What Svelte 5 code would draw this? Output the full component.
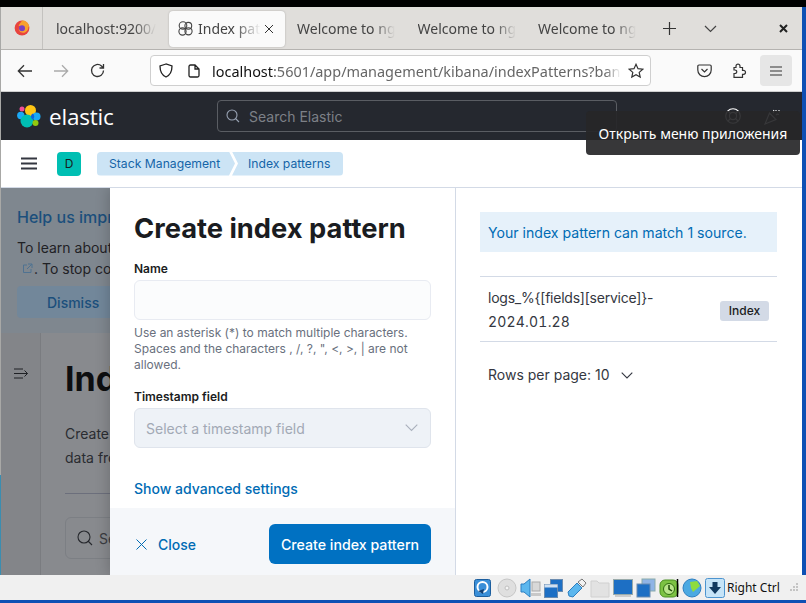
<script>
  const tabs = ['Welcome to nginx!', 'Welcome to nginx!', 'Welcome to nginx!'];
</script>

<div class="screen">
  <div class="topblack"></div>
  <div class="window">
    <div class="deskedge"></div>
    <div class="browser">
      <div class="tabbar">
        <div class="ffbox">
          <svg width="16" height="16" viewBox="0 0 16 16">
            <circle cx="8" cy="8" r="7.4" fill="#e8443f" />
            <path d="M8 .6a7.4 7.4 0 0 1 7.2 5.6c.4 2-.2 1-.8.4.3 2.2-1 5-3.4 5.8C8.400 13.400 5 12 4.800 9.400 4.600 7.600 6 7 6.800 6.600 5.800 6 5 6 4.500 6.200 5 4 6.500 3.500 8 .6z" fill="#f9a12e" />
            <circle cx="8" cy="8.300" r="3" fill="#7a3fc4" />
          </svg>
        </div>
        <div class="tab firsttab"><span class="tabtext">localhost:9200/</span></div>
        <div class="tab active">
          <svg class="globe" width="17" height="17" viewBox="0 0 17 17" fill="none" stroke="#444" stroke-width="1.1">
            <circle cx="6" cy="5.500" r="3.800" /><circle cx="11.300" cy="5.800" r="3.400" /><circle cx="5.500" cy="11.500" r="3.600" /><circle cx="11.500" cy="11.300" r="3.600" />
          </svg>
          <span class="tabtext short">Index patterns</span>
          <svg class="tabclose" width="10" height="10" viewBox="0 0 10 10" stroke="#333" stroke-width="1" fill="none"><path d="M1 1l8 8M9 1l-8 8" /></svg>
        </div>
        {#each tabs as t}
          <div class="tab plain"><span class="tabtext">{t}</span></div>
        {/each}
        <svg class="plus" width="13" height="13" viewBox="0 0 13 13" stroke="#333" stroke-width="1.200"><path d="M6.500 0v13M0 6.500h13" /></svg>
        <svg class="listall" width="13" height="8" viewBox="0 0 13 8" stroke="#444" stroke-width="1.200" fill="none"><path d="M1 1l5.500 5.500L12 1" /></svg>
        <svg class="winclose" width="9" height="9" viewBox="0 0 9 9" stroke="#222" stroke-width="2"><path d="M1 1l7 7M8 1L1 8" /></svg>
      </div>

      <div class="navbar">
        <svg class="nav back" width="16" height="14" viewBox="0 0 16 14" fill="none" stroke="#333" stroke-width="1.300"><path d="M15 7H1.500M7 1.200 1.300 7 7 12.800" /></svg>
        <svg class="nav fwd" width="16" height="14" viewBox="0 0 16 14" fill="none" stroke="#aaa" stroke-width="1.300"><path d="M1 7h13.500M9 1.200 14.700 7 9 12.800" /></svg>
        <svg class="nav reload" width="15" height="15" viewBox="0 0 15 15" fill="none" stroke="#333" stroke-width="1.300"><path d="M13.500 7.500a6 6 0 1 1-2-4.500L13.500 5M13.500 1v4h-4" /></svg>
        <div class="urlbar">
          <svg class="shield" width="14" height="15" viewBox="0 0 14 15" fill="none" stroke="#222" stroke-width="1.300"><path d="M7 1 1 3c0 5.500 1.500 9 6 11 4.500-2 6-5.500 6-11z" /></svg>
          <svg class="pageicon" width="12" height="14" viewBox="0 0 12 14" fill="none" stroke="#222" stroke-width="1.300"><path d="M2.500 1h4.500L11 5v6.500a1.500 1.500 0 0 1-1.500 1.500h-7A1.500 1.500 0 0 1 1 11.500v-9A1.500 1.500 0 0 1 2.500 1zM7 1v4h4" /></svg>
          <div class="url"><span class="host">localhost</span>:5601/app/management/kibana/indexPatterns?ban</div>
          <svg class="star" width="16" height="16" viewBox="0 0 16 16" fill="none" stroke="#333" stroke-width="1.200"><path d="M8 1.300l2 4.400 4.800.5-3.600 3.200 1 4.700L8 11.700l-4.200 2.400 1-4.700L1.200 6.200 6 5.700z" /></svg>
        </div>
        <svg class="pocket" width="15" height="14" viewBox="0 0 15 14" fill="none" stroke="#333" stroke-width="1.200"><path d="M2 1h11a1.200 1.200 0 0 1 1.200 1.200V6a6.700 6.700 0 0 1-13.400 0V2.200A1.200 1.200 0 0 1 2 1z" /><path d="M4.500 5l3 3 3-3" /></svg>
        <svg class="ext" width="15" height="15" viewBox="0 0 15 15" fill="none" stroke="#333" stroke-width="1.200"><path d="M1 14.300h8.500v-3h1a2 2 0 1 0 0-4h-1V4.500H7V3.200a2 2 0 1 0-4 0v1.300H1v2.500h1a1.700 1.700 0 1 1 0 3.500H1z" /></svg>
        <div class="menubtn">
          <svg width="12" height="10" viewBox="0 0 12 10" stroke="#333" stroke-width="1.100"><path d="M0 1h12M0 5h12M0 9h12" /></svg>
        </div>
      </div>

      <div class="kheader">
        <div class="logo">
          <svg width="25" height="25" viewBox="0 0 25 25">
            <circle cx="13.500" cy="6.500" r="5.500" fill="#fec514" />
            <circle cx="5" cy="5" r="2.500" fill="#f04e98" />
            <circle cx="19.500" cy="12.500" r="4" fill="#1ba9f5" />
            <circle cx="3.800" cy="11.500" r="3.700" fill="#1ba9f5" />
            <circle cx="10" cy="17" r="6.500" fill="#00bfb3" />
            <circle cx="18.500" cy="19" r="3" fill="#93c90e" />
            <path d="M15.800 9.500a3.500 3.500 0 0 0 0 6.200 4 4 0 0 0 0-6.200z" fill="#0b64dd" />
          </svg>
          <span class="wordmark">elastic</span>
        </div>
        <div class="ksearch">
          <svg width="14" height="14" viewBox="0 0 14 14" fill="none" stroke="#98a2b3" stroke-width="1.100"><circle cx="6" cy="6" r="5" /><path d="M9.500 9.500 13 13" /></svg>
          <span>Search Elastic</span>
        </div>
        <div class="kicons">
          <svg width="16" height="16" viewBox="0 0 16 16" fill="none" stroke="#fff" stroke-width="1.100"><circle cx="8" cy="8" r="7.300" /><circle cx="8" cy="8" r="3.600" /><path d="M3 3l2.500 2.500M13 3l-2.500 2.500M3 13l2.500-2.500M13 13l-2.500-2.500" /></svg>
          <svg width="17" height="17" viewBox="0 0 17 17" fill="none" stroke="#fff" stroke-width="1.100"><path d="M1 16 5.500 5l6.500 6.500zM9 5c1-1 1-2 .5-3M12 7c1-1 2-1 3-.5M12 2v1M15 2v1M15 4h1" /></svg>
        </div>
      </div>

      <div class="crumbbar">
        <svg width="16" height="13" viewBox="0 0 16 13" stroke="#343741" stroke-width="2"><path d="M0 1.500h16M0 6.500h16M0 11.500h16" /></svg>
        <div class="avatar">D</div>
        <div class="crumbs">
          <span class="crumb one">Stack Management</span>
          <span class="crumb two">Index patterns</span>
        </div>
      </div>

      <div class="app">
        <div class="under">
          <div class="bcallout">
            <div class="btitle">Help us improve the Elastic Stack</div>
            <div class="btext">To learn about how usage data helps us manage</div>
            <div class="btext">
              <svg width="11" height="11" viewBox="0 0 11 11" fill="none" stroke="#4f7291" stroke-width="1"><path d="M5 2H1.500v7.500H9V6M6 1h4v4M10 1 5 6" /></svg><span>. To stop collection</span>
            </div>
            <div class="bdismiss">Dismiss</div>
          </div>
          <div class="bpage">
            <div class="bside">
              <svg width="15" height="11" viewBox="0 0 15 11" fill="none" stroke="#1f2125" stroke-width="1"><path d="M0 1h9M0 5.500h13.500M0 10h9M10.500 2.500l3 3-3 3" /></svg>
            </div>
            <div class="bmain">
              <div class="bh1">Index patterns</div>
              <div class="bp">Create and manage the index patterns that help you retrieve your</div>
              <div class="bp">data from Elasticsearch.</div>
              <div class="brule"></div>
              <div class="bsearch">
                <svg width="16" height="16" viewBox="0 0 16 16" fill="none" stroke="#26282d" stroke-width="1.100"><circle cx="7" cy="7" r="6" /><path d="M11 11l4 4" /></svg>
                <span>Search...</span>
              </div>
            </div>
          </div>
        </div>

        <div class="flyout">
          <div class="fleft">
            <div class="fbody">
              <h1>Create index pattern</h1>
              <div class="label lname">Name</div>
              <div class="input"></div>
              <div class="help">Use an asterisk (*) to match multiple characters. Spaces and the characters , /, ?, ", &lt;, &gt;, | are not allowed.</div>
              <div class="label lts">Timestamp field</div>
              <div class="select">
                <span>Select a timestamp field</span>
                <svg width="13" height="8" viewBox="0 0 13 8" fill="none" stroke="#a9b0bc" stroke-width="1.100"><path d="M.7.7l5.800 5.800L12.300.7" /></svg>
              </div>
              <div class="advanced">Show advanced settings</div>
            </div>
            <div class="ffooter">
              <div class="closebtn">
                <svg width="11" height="11" viewBox="0 0 11 11" stroke="#006bb4" stroke-width="1"><path d="M.5.5l10 10M10.500.5l-10 10" /></svg>
                <span>Close</span>
              </div>
              <div class="createbtn">Create index pattern</div>
            </div>
          </div>
          <div class="fright">
            <div class="match">Your index pattern can match 1 source.</div>
            <div class="row">
              <div class="rowname"><span class="logname">logs_%&#123;[fields][service]&#125;-</span><span class="logdate">2024.01.28</span></div>
              <div class="badge">Index</div>
            </div>
            <div class="rows">
              <span>Rows per page: 10</span>
              <svg width="12" height="7" viewBox="0 0 12 7" fill="none" stroke="#343741" stroke-width="1.100"><path d="M.7.7 6 6l5.300-5.300" /></svg>
            </div>
          </div>
        </div>
      </div>

      <div class="tooltip">Открыть меню приложения</div>
    </div>
    <div class="sidebar"></div>
  </div>

  <div class="statusbar">
    <svg class="st" width="20" height="20" viewBox="0 0 20 20"><rect x=".5" y="1.500" width="16" height="17" rx="2" fill="#3a8fd8" stroke="#1c5e9e" /><circle cx="8.500" cy="9" r="5" fill="none" stroke="#fff" stroke-width="2" /><path d="M4 13l5 3 1-5z" fill="#123e72" /></svg>
    <svg class="st" width="20" height="20" viewBox="0 0 20 20"><circle cx="10" cy="10" r="9" fill="#dfdfdf" stroke="#c6c6c6" /><circle cx="10" cy="10" r="2" fill="#f4f4f4" stroke="#c0c0c0" /></svg>
    <svg class="st" width="21" height="20" viewBox="0 0 21 20"><path d="M1 6h3l6-5v18l-6-5H1z" fill="#5cb7ee" stroke="#2d7fc1" /><rect x="12" y="4" width="8" height="9" fill="#d8d8d8" stroke="#aaa" /><rect x="11" y="15" width="10" height="3" fill="#c8c8c8" /></svg>
    <svg class="st" width="20" height="20" viewBox="0 0 20 20"><rect x="6.500" y="1.500" width="12" height="12" fill="#1d6fc4" stroke="#6b8cb0" /><rect x=".5" y="6.500" width="13" height="13" fill="#1d6fc4" stroke="#6b8cb0" /><rect x=".5" y="6.500" width="13" height="3" fill="#cfe0f2" /></svg>
    <svg class="st" width="20" height="20" viewBox="0 0 20 20"><path d="M2 18l-1-4 9-9 5 5-9 9z" fill="#5cb7ee" stroke="#2d7fc1" /><path d="M11 4l4-3 4 4-3 4z" fill="#f2f2f2" stroke="#777" /></svg>
    <svg class="st" width="20" height="20" viewBox="0 0 20 20"><path d="M1 3h6l2 2h10v14H1z" fill="#e2e2e2" stroke="#d0d0d0" /></svg>
    <svg class="st" width="20" height="20" viewBox="0 0 20 20"><rect x=".5" y="1.500" width="19" height="15" fill="#1d6fc4" stroke="#9aa" /><rect x="2" y="17" width="16" height="2" fill="#ccc" /></svg>
    <svg class="st" width="20" height="20" viewBox="0 0 20 20"><rect x="6" y="1" width="13" height="12" fill="#8fb4e6" stroke="#8aa" /><rect x="1" y="6" width="13" height="13" fill="#1d6fc4" stroke="#6b8cb0" /></svg>
    <svg class="st" width="20" height="20" viewBox="0 0 20 20"><rect x="1" y="2" width="18" height="17" rx="5" fill="#7cc243" stroke="#4b8f22" /><circle cx="10" cy="11" r="5.500" fill="#b9e58a" stroke="#2f6d10" /><path d="M10 7v4l3 2" fill="none" stroke="#1e4a08" stroke-width="1.500" /><path d="M18.500 1v18" stroke="#000" stroke-width="1.500" /></svg>
    <svg class="st" width="20" height="20" viewBox="0 0 20 20"><circle cx="10" cy="10" r="9" fill="#4ba9e2" stroke="#2d7fc1" /><path d="M8 4l7-1 3 5-7 6-2-4z" fill="#8fdc3f" /></svg>
    <svg class="st" width="20" height="20" viewBox="0 0 20 20"><rect x=".5" y=".5" width="19" height="19" rx="2" fill="#c6e4f8" stroke="#4c94cf" /><path d="M7.500 4h5v5H16l-6 7-6-7h3.500z" fill="#11395f" /></svg>
    <span class="rc">Right Ctrl</span>
    <svg class="grip" width="10" height="10" viewBox="0 0 10 10" fill="#c4c4c4"><rect x="7" y="0" width="2" height="2" /><rect x="4" y="3" width="2" height="2" /><rect x="7" y="3" width="2" height="2" /><rect x="1" y="6" width="2" height="2" /><rect x="4" y="6" width="2" height="2" /><rect x="7" y="6" width="2" height="2" /></svg>
  </div>
  <div class="bottomblue"></div>
</div>

<style>
  :global(body) { margin: 0; background: #0d4fb5; }
  .screen { width: 806px; height: 603px; display: flex; flex-direction: column; overflow: hidden; font-family: Inter, sans-serif; background: #f0f0f0; }
  .topblack { height: 7px; background: #000; flex: none; }
  .window { height: 568px; flex: none; display: flex; }
  .deskedge { width: 1px; flex: none; background: linear-gradient(to bottom, #a8a8a6 0 468px, #3a8db0 468px 100%); }
  .browser { position: relative; flex: 1; min-width: 0; display: flex; flex-direction: column; background: #fff; }
  .sidebar { width: 4px; background: #0e50b4; flex: none; }

  .tabbar { height: 43px; flex: none; box-sizing: border-box; padding-top: 1px; display: flex; align-items: center; background: #e0dedb; border-bottom: 1px solid #b5b3b0; font-family: "Noto Sans", sans-serif; font-size: 14px; color: #444; }
  .ffbox { width: 42px; margin-top: -1px; align-self: stretch; box-sizing: border-box; display: flex; align-items: center; justify-content: center; border-right: 1px solid #c4c2bf; flex: none; }
  .tab { display: flex; align-items: center; flex: none; height: 36px; box-sizing: border-box; }
  .tabtext { display: block; overflow: hidden; white-space: nowrap; mask-image: linear-gradient(to right, #000 78%, transparent 100%); }
  .firsttab { width: 125px; padding-left: 13px; }
  .firsttab .tabtext { width: 100px; }
  .active { width: 116px; margin-left: 1px; background: #fafafa; border-radius: 4px; box-shadow: 0 0 2px rgba(0,0,0,.25); padding-left: 8px; position: relative; }
  .globe { flex: none; margin-right: 4px; }
  .short { width: 66px; mask-image: linear-gradient(to right, #000 55%, transparent 95%); }
  .tabclose { margin-left: 0; flex: none; }
  .plain { width: 120.500px; padding-left: 12px; }
  .plain .tabtext { width: 98px; }
  .plus { margin-left: 16px; flex: none; }
  .listall { margin-left: 28px; flex: none; }
  .winclose { margin-left: 62px; flex: none; }

  .navbar { height: 41px; flex: none; box-sizing: border-box; display: flex; align-items: center; background: #fafafa; font-family: "Noto Sans", sans-serif; }
  .back { margin-left: 16px; }
  .fwd { margin-left: 20px; }
  .reload { margin-left: 21px; }
  .urlbar { width: 501px; height: 31px; margin-left: 45px; box-sizing: border-box; display: flex; align-items: center; background: #fff; border: 1px solid #cfcfcf; border-radius: 4px; flex: none; position: relative; }
  .shield { margin-left: 8px; flex: none; }
  .pageicon { margin-left: 15px; flex: none; }
  .url { margin-left: 12px; width: 409px; padding-top: 1px; overflow: hidden; white-space: nowrap; font-size: 14.450px; color: #666; mask-image: linear-gradient(to right, #000 96%, transparent 100%); }
  .host { color: #111; }
  .star { margin-left: 7px; flex: none; }
  .pocket { margin-left: 46px; flex: none; }
  .ext { margin-left: 21px; flex: none; }
  .menubtn { width: 32px; height: 31px; margin-left: 12px; background: #e6e6e6; border-radius: 4px; display: flex; align-items: center; justify-content: center; flex: none; }

  .kheader { height: 49px; flex: none; box-sizing: border-box; display: flex; align-items: center; background: #25282f; border-top: 1px solid #cfcfcf; }
  .logo { display: flex; align-items: center; width: 216px; padding-left: 16px; box-sizing: border-box; flex: none; }
  .wordmark { font-family: "Open Sans", sans-serif; font-size: 22.500px; color: #fff; margin-left: 7px; letter-spacing: -.2px; }
  .ksearch { width: 400px; height: 32px; box-sizing: border-box; border: 1px solid #5a5d63; border-radius: 4px; background: #25282f; display: flex; align-items: center; padding-left: 8px; color: #7d8087; font-size: 14px; gap: 9px; flex: none; }
  .kicons { display: flex; align-items: center; gap: 23px; margin-left: 108px; }

  .crumbbar { height: 48px; flex: none; box-sizing: border-box; display: flex; align-items: center; padding-left: 20px; background: #fff; border-bottom: 1px solid #d3dae6; }
  .avatar { width: 24px; height: 24px; margin-left: 20px; background: #00bfb3; border-radius: 4px; display: flex; align-items: center; justify-content: center; font-size: 12px; color: #1a1c21; flex: none; }
  .crumbs { display: flex; margin-left: 16px; height: 24px; font-size: 12.200px; color: #1565a8; }
  .crumb { display: flex; align-items: center; background: #cce4f5; height: 24px; white-space: nowrap; box-sizing: border-box; }
  .one { padding-left: 12px; width: 138px; border-radius: 4px 0 0 4px; clip-path: polygon(0 0, calc(100% - 6px) 0, 100% 50%, calc(100% - 6px) 100%, 0 100%); }
  .two { padding-left: 16px; width: 111px; margin-left: -3px; border-radius: 0 4px 4px 0; clip-path: polygon(0 0, 100% 0, 100% 100%, 0 100%, 6px 50%); }

  .app { position: relative; flex: 1; min-height: 0; background: #888a8e; overflow: hidden; }
  .under { height: 100%; display: flex; flex-direction: column; color: #1f2125; background: #888a8e; }
  .bcallout { height: 145px; box-sizing: border-box; flex: none; padding: 19px 16px 0; background: #7f878f; white-space: nowrap; font-size: 14px; }
  .btitle { color: #1b4f7c; font-size: 16px; font-weight: 500; line-height: 20px; }
  .btext { line-height: 21px; margin-top: 0; color: #1f2125; display: flex; align-items: center; padding-left: 5px; }
  .btitle + .btext { margin-top: 10px; padding-left: 0; }
  .btext svg { margin-right: 1px; }
  .bdismiss { margin-top: 7px; width: 200px; height: 32px; background: #72879a; border-radius: 4px; color: #1b4f7c; font-weight: 500; display: flex; align-items: center; padding-left: 30px; box-sizing: border-box; }
  .bpage { flex: 1; display: flex; min-height: 0; }
  .bside { width: 40px; flex: none; box-sizing: border-box; background: #838589; border-right: 1px solid #7a7c80; padding: 35px 0 0 13px; }
  .bside svg { display: block; }
  .bmain { flex: 1; padding: 23px 0 0 24px; white-space: nowrap; background: #888a8e; }
  .bh1 { font-size: 34px; font-weight: 700; color: #0d0e10; line-height: 46px; }
  .bp { font-size: 14px; line-height: 24px; color: #2a2c31; }
  .bh1 + .bp { margin-top: 20px; }
  .brule { height: 1px; background: #6c6f7c; margin-top: 23px; width: 300px; }
  .bsearch { margin-top: 23px; width: 300px; height: 40px; display: flex; align-items: center; gap: 6px; border: 1px solid #7c7f84; border-radius: 6px; padding-left: 11px; font-size: 14px; color: #3a3c41; }

  .flyout { position: absolute; left: 109px; top: 0; right: 0; bottom: 0; display: flex; background: #fff; box-shadow: -2px 0 12px rgba(0,0,0,.18); font-size: 14px; color: #343741; }
  .fleft { width: 346px; flex: none; box-sizing: border-box; border-right: 1px solid #d3dae6; display: flex; flex-direction: column; }
  .fbody { flex: 1; padding: 25px 24px 0; min-height: 0; overflow: hidden; }
  h1 { margin: 0; font-size: 27.300px; line-height: 32px; font-weight: 700; color: #1a1c21; white-space: nowrap; }
  .label { font-size: 12px; font-weight: 600; line-height: 16px; color: #1a1c21; }
  .lname { margin-top: 16px; }
  .lts { margin-top: 16px; }
  .input { height: 40px; margin-top: 3px; box-sizing: border-box; background: #fbfcfd; border: 1px solid #e8ebf2; border-radius: 6px; }
  .help { margin-top: 5px; font-size: 12px; line-height: 16px; color: #69707d; }
  .select { height: 40px; margin-top: 3px; box-sizing: border-box; padding: 0 12px 0 11px; display: flex; align-items: center; justify-content: space-between; background: #eef2f7; border: 1px solid #dfe4ec; border-radius: 6px; color: #a2a9b5; font-size: 14px; }
  .advanced { margin-top: 31px; line-height: 20px; color: #006bb4; font-weight: 500; font-size: 14px; }
  .ffooter { height: 67px; flex: none; box-sizing: border-box; padding: 16px 24px 11px; display: flex; align-items: center; justify-content: space-between; background: #f5f7fa; }
  .closebtn { display: flex; align-items: center; gap: 11px; padding-left: 2px; color: #006bb4; font-weight: 500; }
  .createbtn { width: 162px; height: 40px; background: #0071c2; border-radius: 6px; color: #fff; font-weight: 500; font-size: 14.200px; display: flex; align-items: center; justify-content: center; }
  .fright { flex: 1; padding: 24px 25px 0 24px; }
  .match { height: 40px; background: #e6f1fa; color: #006bb4; font-size: 14.100px; display: flex; align-items: center; padding-left: 8px; }
  .row { margin-top: 24px; height: 66px; box-sizing: border-box; display: flex; align-items: center; justify-content: space-between; padding: 0 8px; border-top: 1px solid #d3dae6; border-bottom: 1px solid #d3dae6; line-height: 24px; }
  .rowname { color: #343741; padding-top: 1px; display: flex; flex-direction: column; }
  .logname { letter-spacing: -.23px; }
  .logdate { font-variant-numeric: tabular-nums; letter-spacing: .2px; }
  .badge { width: 49px; height: 20px; margin-top: 3px; background: #d3dae6; border-radius: 3px; display: flex; align-items: center; justify-content: center; font-size: 12px; font-weight: 500; color: #1a1c21; }
  .rows { margin-top: 23px; padding-left: 8px; display: flex; align-items: center; gap: 11px; line-height: 20px; }

  .tooltip { position: absolute; left: 585px; top: 104px; width: 214px; height: 44px; box-sizing: border-box; background: rgba(38,38,40,.92); border-radius: 4px; color: #fff; font-family: "Noto Sans", sans-serif; font-size: 14px; display: flex; align-items: center; justify-content: center; }

  .statusbar { height: 25px; flex: none; display: flex; align-items: center; background: #f0f0f0; padding-left: 474px; box-sizing: border-box; gap: 3px; }
  .st { flex: none; }
  .rc { font-family: "Noto Sans", sans-serif; font-size: 12px; color: #111; margin-left: -1px; white-space: nowrap; }
  .grip { margin-left: 6px; flex: none; }
  .bottomblue { height: 3px; background: #0e50b4; flex: none; }
</style>
